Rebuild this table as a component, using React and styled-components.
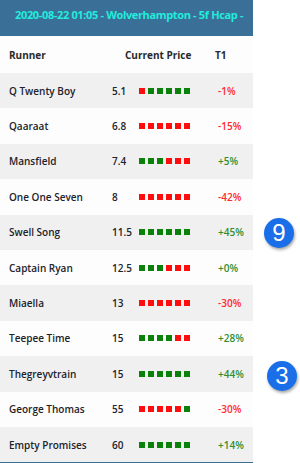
import React from 'react';
import styled, { createGlobalStyle } from 'styled-components';

const GlobalStyle = createGlobalStyle`
  html, body { margin: 0; padding: 0; background: #fff; }
  body { font-family: "Open Sans", "Noto Sans", sans-serif; }
`;

const Page = styled.div`
  position: relative;
  width: 300px;
  height: 463px;
  overflow: hidden;
  background: #fff;
`;

const Panel = styled.div`
  width: 253px;
  border-bottom: 2px solid #3c6f96;
`;

const Title = styled.div`
  height: 36px;
  background: #3a6f98;
  color: #22ecdc;
  font-size: 11px;
  letter-spacing: -0.35px;
  font-weight: 700;
  line-height: 30px;
  padding-left: 15px;
  white-space: nowrap;
`;

const HeadRow = styled.div`
  display: grid;
  grid-template-columns: 116px 90px 1fr;
  align-items: center;
  height: 37px;
  padding-left: 9px;
  background: #fdfdfd;
  font-size: 10px;
  font-weight: 700;
  color: #2a2a2a;
`;

const Row = styled.div`
  display: grid;
  grid-template-columns: 103px 27px 79px 1fr;
  align-items: center;
  height: 35.4px;
  padding-left: 9px;
  background: ${p => (p.$alt ? '#f0f0f1' : '#fdfdfd')};
  font-size: 10px;
  font-weight: 600;
  color: #22222a;
`;

const Name = styled.span`
  white-space: nowrap;
`;

const Price = styled.span``;

const Squares = styled.div`
  display: flex;
  gap: 3px;
`;

const Sq = styled.span`
  width: 6px;
  height: 6px;
  background: ${p => (p.$up ? '#0a820a' : '#ff0d0d')};
`;

const Pct = styled.span`
  color: ${p => (p.$up ? '#2f8f2f' : '#ff2a2a')};
  font-weight: 600;
`;

const Badge = styled.div`
  position: absolute;
  left: ${p => p.$x}px;
  top: ${p => p.$y}px;
  width: 30px;
  height: 30px;
  border-radius: 50%;
  background: #1a6ee8;
  color: #fff;
  font-size: 24px;
  font-family: "Liberation Sans", Arial, sans-serif;
  display: flex;
  align-items: center;
  justify-content: center;
  box-shadow: 1px 2px 3px rgba(0, 0, 0, 0.35);
`;

const runners = [
  ['Q Twenty Boy', '5.1', 'RGGGGG', '-1%'],
  ['Qaaraat', '6.8', 'RRRRRR', '-15%'],
  ['Mansfield', '7.4', 'GGGRRR', '+5%'],
  ['One One Seven', '8', 'RRRRRR', '-42%'],
  ['Swell Song', '11.5', 'GGGGGG', '+45%'],
  ['Captain Ryan', '12.5', 'GGGRRR', '+0%'],
  ['Miaella', '13', 'RRRRRR', '-30%'],
  ['Teepee Time', '15', 'GGGGRR', '+28%'],
  ['Thegreyvtrain', '15', 'GGGGGG', '+44%'],
  ['George Thomas', '55', 'RRRRRG', '-30%'],
  ['Empty Promises', '60', 'GGGGGG', '+14%'],
];

export default function App() {
  return (
    <Page>
      <GlobalStyle />
      <Panel>
        <Title>2020-08-22 01:05 - Wolverhampton - 5f Hcap -</Title>
        <HeadRow>
          <span>Runner</span>
          <span>Current Price</span>
          <span>T1</span>
        </HeadRow>
        {runners.map(([name, price, sq, pct], i) => (
          <Row key={name} $alt={i % 2 === 0}>
            <Name>{name}</Name>
            <Price>{price}</Price>
            <Squares>
              {sq.split('').map((c, j) => (
                <Sq key={j} $up={c === 'G'} />
              ))}
            </Squares>
            <Pct $up={pct.startsWith('+')}>{pct}</Pct>
          </Row>
        ))}
      </Panel>
      <Badge $x={264} $y={218}>9</Badge>
      <Badge $x={267} $y={361}>3</Badge>
    </Page>
  );
}
